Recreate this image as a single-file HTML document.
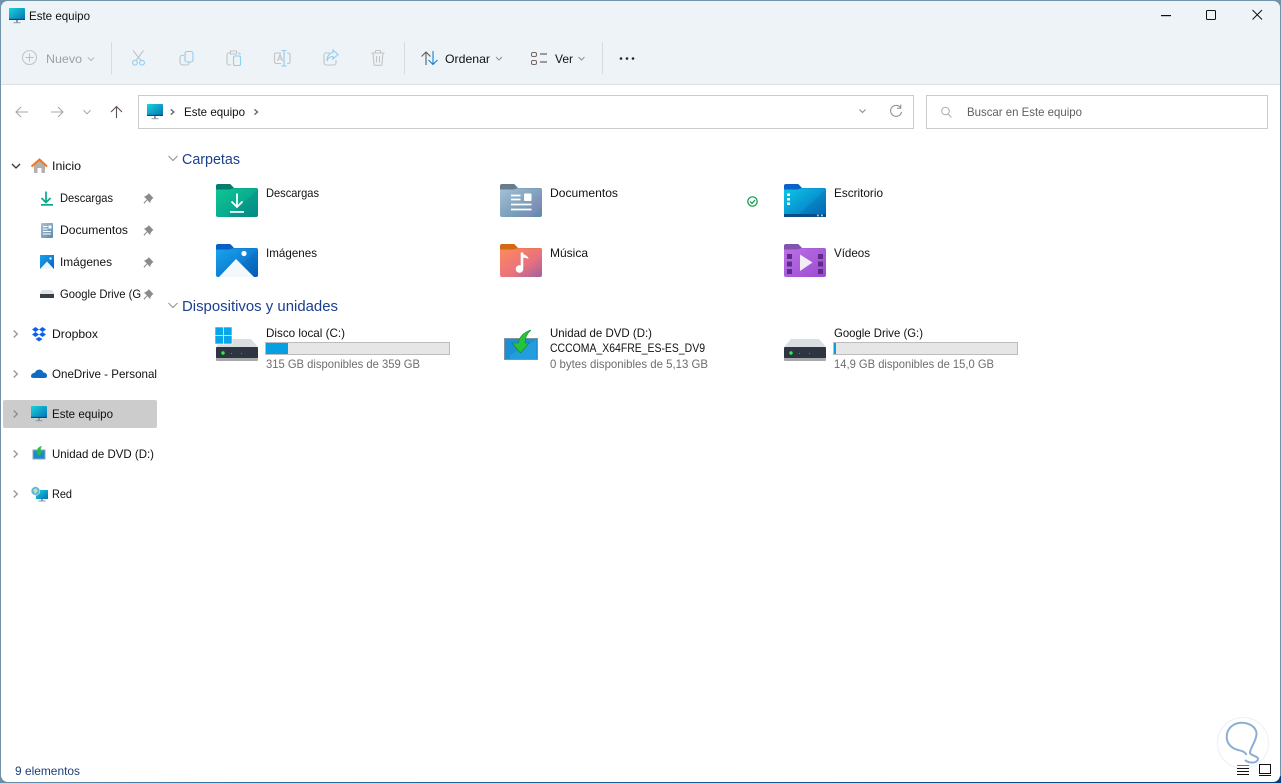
<!DOCTYPE html>
<html lang="es"><head><meta charset="utf-8"><title>Este equipo</title>
<style>
html,body{margin:0;padding:0;background:#fff;width:1281px;height:783px;overflow:hidden}
svg{display:block}
text{font-family:"Liberation Sans",sans-serif;font-size:12px;fill:#111;white-space:pre}
.g{fill:#6d6d6d}
.h{font-size:14.5px;fill:#1b3f8f}
.b{fill:none;stroke:#8fcdf3;stroke-width:1.1}
.y{fill:none;stroke:#c4c4c4;stroke-width:1.1}
</style></head><body>
<svg width="1281" height="783" viewBox="0 0 1281 783" xmlns="http://www.w3.org/2000/svg">
<defs>
<linearGradient id="mon" x1="0" y1="0" x2="1" y2="1"><stop offset="0" stop-color="#19d3d8"/><stop offset="1" stop-color="#0570b8"/></linearGradient>
<linearGradient id="gDl" x1="0" y1="0" x2="1" y2="1"><stop offset="0" stop-color="#0ec792"/><stop offset="1" stop-color="#04948e"/></linearGradient>
<linearGradient id="gDoc" x1="0" y1="0" x2="1" y2="1"><stop offset="0" stop-color="#a4c0d6"/><stop offset="1" stop-color="#5f87a8"/></linearGradient>
<linearGradient id="gDsk" x1="0" y1="0" x2="1" y2="1"><stop offset="0" stop-color="#0cc9e4"/><stop offset="1" stop-color="#0567c2"/></linearGradient>
<linearGradient id="gImg" x1="0" y1="0" x2="1" y2="1"><stop offset="0" stop-color="#1aa5ea"/><stop offset="1" stop-color="#0660c4"/></linearGradient>
<linearGradient id="gMus" x1="0" y1="0" x2="1" y2="1"><stop offset="0" stop-color="#fd8b5c"/><stop offset=".6" stop-color="#e8717e"/><stop offset="1" stop-color="#a2609f"/></linearGradient>
<linearGradient id="gVid" x1="0" y1="0" x2="1" y2="1"><stop offset="0" stop-color="#bc6fe6"/><stop offset="1" stop-color="#9a4ccf"/></linearGradient>
<linearGradient id="bot" x1="0" y1="0" x2="1" y2="0"><stop offset="0" stop-color="#6e8fa5"/><stop offset=".2" stop-color="#2f6a9c"/><stop offset="1" stop-color="#0b3a80"/></linearGradient>
<symbol id="monitor" viewBox="0 0 16 16" overflow="visible">
<rect x="0" y="0" width="16" height="12" rx=".8" fill="url(#mon)"/><rect x="0" y="10.800" width="16" height="1.200" fill="#0a4e78"/>
<rect x="7" y="12" width="2" height="2.400" fill="#8a9aa5"/><rect x="4.500" y="14.200" width="7" height="1" fill="#8a9aa5"/>
</symbol>
<symbol id="drive" viewBox="0 0 42 22" overflow="visible">
<path d="M7 0H35L42 8V20a2 2 0 0 1-2 2H2a2 2 0 0 1-2-2V8Z" fill="#d9dfe1"/>
<path d="M1 8H41a1 1 0 0 1 1 1V19H0V9a1 1 0 0 1 1-1Z" fill="#2f3540"/>
<rect x="0" y="19" width="42" height="3" rx="1" fill="#a6a8aa"/>
<circle cx="7" cy="14" r="1.700" fill="#2bf04a"/><rect x="15" y="14" width="1" height="1" fill="#8b7b45"/><rect x="25" y="14" width="1" height="1" fill="#8b7b45"/>
</symbol>
<path id="pin" d="M5 0 10 5 8.800 5.600 6.800 8.600 6.600 10 3.900 7.100 .8 10.600 0 9.800 3.300 6.400.4 3.600 1.800 3.300 4.600 1.200Z" fill="#8b8b8b"/>
<path id="chev" d="M-3.500-1.800 0 1.800 3.500-1.800" fill="none" stroke-width="1"/>
<path id="chevs" d="M-3-1.500 0 1.500 3-1.500" fill="none" stroke-width="1"/>
<path id="chevr" d="M-1.800-3.500 1.800 0-1.800 3.500" fill="none" stroke-width="1.400"/>
<path id="chevb" d="M-1.500-2.600 1.500 0-1.500 2.600" fill="none" stroke-width="1.400"/>
<path id="shade" d="M42 5V31a2 2 0 0 1-2 2H12Z" fill="#00304a" opacity=".1"/>
</defs>

<!-- frame -->
<rect width="1281" height="783" fill="#7193a8"/>
<rect x="0" y="776" width="1281" height="7" fill="url(#bot)"/>
<rect x="1" y="1" width="1279" height="781" rx="7" fill="#fff"/>
<path d="M1 84V8a7 7 0 0 1 7-7H1273a7 7 0 0 1 7 7V84Z" fill="#edf3f7"/>
<rect x="1" y="84" width="1279" height="1" fill="#dde1e4"/>

<!-- title bar -->
<use href="#monitor" x="9" y="8" width="16" height="16"/>
<text x="29" y="20" textLength="61" lengthAdjust="spacingAndGlyphs">Este equipo</text>
<rect x="1161" y="15" width="10" height="1.200" fill="#111"/>
<rect x="1206.500" y="10.500" width="9" height="9" rx="1" fill="none" stroke="#111"/>
<path d="M1252.500 10 1262 19.500M1262 10 1252.500 19.500" stroke="#111" fill="none"/>

<!-- toolbar -->
<circle cx="29.500" cy="57.500" r="7" fill="none" stroke="#c6c6c6" stroke-width="1.100"/>
<path d="M29.500 53.500V61.500M25.500 57.500H33.500" stroke="#8fcdf3"/>
<text x="46" y="63" style="fill:#a0a0a0" textLength="36" lengthAdjust="spacingAndGlyphs">Nuevo</text>
<use href="#chevs" x="91" y="59" stroke="#b5b5b5"/>
<rect x="111" y="42" width="1" height="32" fill="#d8dcdf"/>
<!-- scissors -->
<path class="y" d="M133 50.500 141 60.500M143.500 50.500 136 60.500"/>
<circle class="b" cx="135" cy="62.700" r="2.400"/><circle class="b" cx="142" cy="62.700" r="2.400"/>
<!-- copy -->
<rect class="b" x="185" y="51.500" width="8" height="10.500" rx="2"/>
<path class="y" d="M184 55.500H182a2 2 0 0 0-2 2V62a3 3 0 0 0 3 3H187a2 2 0 0 0 2-2V62.500"/>
<!-- paste -->
<path class="y" d="M230 53H229a2 2 0 0 0-2 2V63a2 2 0 0 0 2 2H231M238 53H239a2 2 0 0 1 1 1V55M230.500 51H236.500V54H230.500Z"/>
<rect class="b" x="233.500" y="56" width="7" height="9.500" rx="1.500"/>
<!-- rename -->
<path class="y" d="M281 53H276a1.500 1.500 0 0 0-1.500 1.500V62a1.500 1.500 0 0 0 1.500 1.500H281M287 53H288.500a1.500 1.500 0 0 1 1.500 1.500V62a1.500 1.500 0 0 1-1.500 1.500H287"/>
<path class="b" d="M281.500 50.500H286.500M284 50.500V66M281.500 66H286.500"/>
<path class="y" d="M277.500 61 280 54.500 282.500 61M278.500 59H281.500"/>
<!-- share -->
<path class="y" d="M330 53H326a2 2 0 0 0-2 2V63a2 2 0 0 0 2 2H334a2 2 0 0 0 2-2V60"/>
<path class="b" d="M333 50 338 54.500 333 59V56.500C330 56.500 328 58 327 61 327 56 329.500 53 333 52.500Z"/>
<!-- trash -->
<path class="y" d="M371.500 53H384.500M375 53 375.800 50.500H380.200L381 53M373 53 374 64.500a1 1 0 0 0 1 .8H381a1 1 0 0 0 1-.8L383 53M376.500 56V62.500M379.500 56V62.500"/>
<rect x="404" y="42" width="1" height="32" fill="#d8dcdf"/>
<!-- sort -->
<path d="M426 65V52M421.500 56.500 426 52 430.500 56.500" fill="none" stroke="#5d5d5d" stroke-width="1.100"/>
<path d="M433 51V64.500M428.500 60 433 64.500 437.500 60" fill="none" stroke="#0a84d8" stroke-width="1.100"/>
<text x="445" y="63" textLength="45" lengthAdjust="spacingAndGlyphs">Ordenar</text>
<use href="#chevs" x="499" y="58.500" stroke="#909090"/>
<!-- view -->
<rect x="531.500" y="52.500" width="5" height="4" rx="1.500" fill="none" stroke="#7a6565"/>
<rect x="531.500" y="60.500" width="5" height="4" rx="1.500" fill="none" stroke="#7a6565"/>
<path d="M540 54H547M540 62H547" stroke="#444"/>
<text x="555" y="63" textLength="18" lengthAdjust="spacingAndGlyphs">Ver</text>
<use href="#chevs" x="581.500" y="58.500" stroke="#909090"/>
<rect x="602" y="42" width="1" height="32" fill="#d8dcdf"/>
<circle cx="621" cy="58.500" r="1.300" fill="#222"/><circle cx="627" cy="58.500" r="1.300" fill="#222"/><circle cx="633" cy="58.500" r="1.300" fill="#222"/>

<!-- nav -->
<path d="M28 112H16M21 107 16 112 21 117" fill="none" stroke="#a8a8a8" stroke-width="1.100"/>
<path d="M51 112H63M58 107 63 112 58 117" fill="none" stroke="#a8a8a8" stroke-width="1.100"/>
<use href="#chev" x="87" y="112" stroke="#a0a0a0"/>
<path d="M116.500 118V106.500M111 112 116.500 106.500 122 112" fill="none" stroke="#5f5252" stroke-width="1.100"/>
<rect x="138.500" y="95.500" width="775" height="33" fill="#fff" stroke="#cbcbcb"/>
<use href="#monitor" x="147" y="104" width="16" height="16"/>
<use href="#chevb" x="172.300" y="112" stroke="#666"/>
<text x="184" y="116" textLength="61" lengthAdjust="spacingAndGlyphs">Este equipo</text>
<use href="#chevb" x="256" y="112" stroke="#666"/>
<use href="#chevs" x="862.500" y="111" stroke="#888"/>
<path d="M900.500 107.500A5.500 5.500 0 1 0 901.500 112M900.800 104.500V108.200H897" fill="none" stroke="#8a8a8a"/>
<rect x="926.500" y="95.500" width="341" height="33" fill="#fff" stroke="#cbcbcb"/>
<circle cx="945.500" cy="111" r="3.800" fill="none" stroke="#aaa"/><path d="M948 114 951.500 117.500" stroke="#aaa"/>
<text x="967" y="116" style="fill:#5f5f5f" textLength="115" lengthAdjust="spacingAndGlyphs">Buscar en Este equipo</text>

<!-- sidebar -->
<rect x="3" y="400" width="154" height="28" rx="2" fill="#cccccc"/>
<path d="M12 164 16 168 20 164" fill="none" stroke="#333" stroke-width="1.300"/>
<path d="M34 164.500V173H37.500V168H41.500V173H45V164.500L39.500 160Z" fill="#b4b0ac"/>
<path d="M31.500 166.500 39.500 159.500 47 166.500" fill="none" stroke="#f2761c" stroke-width="2"/>
<text x="52" y="170" textLength="29" lengthAdjust="spacingAndGlyphs">Inicio</text>

<path d="M46 191.500V202M41.500 198 46 202.500 50.500 198" fill="none" stroke="#0aa88c" stroke-width="1.700"/><rect x="41" y="204" width="12" height="1.700" fill="#0aa88c"/>
<text x="60" y="202" textLength="53" lengthAdjust="spacingAndGlyphs">Descargas</text>
<use href="#pin" x="143.500" y="193"/>

<rect x="41" y="223" width="12" height="15" rx="1" fill="url(#gDoc)"/>
<path d="M43 226.500H47.500M43 229H47.500M43 231.500H51M43 234H51" stroke="#fff" stroke-width="1"/><rect x="48.500" y="225.500" width="3" height="3" fill="#fff"/>
<text x="60" y="234" textLength="68" lengthAdjust="spacingAndGlyphs">Documentos</text>
<use href="#pin" x="143.500" y="225"/>

<rect x="40" y="255" width="14" height="14" fill="url(#gImg)"/>
<path d="M40 269 47 261.500 54 269Z" fill="#eef6fb"/><rect x="49.500" y="257.500" width="2" height="2" fill="#fff"/>
<text x="60" y="266" textLength="52" lengthAdjust="spacingAndGlyphs">Imágenes</text>
<use href="#pin" x="143.500" y="257"/>

<path d="M42 290H52L54 293V298H40V293Z" fill="#dfe3e5"/><rect x="40" y="294" width="14" height="4" fill="#3a3f45"/>
<svg x="0" y="285" width="141" height="20"><text x="60" y="13" textLength="88" lengthAdjust="spacingAndGlyphs">Google Drive (G:)</text></svg>
<use href="#pin" x="143.500" y="289"/>

<use href="#chevr" x="15.500" y="334" stroke="#9a9a9a"/>
<path d="M35.500 327 39 329.500 35.500 332 32 329.500ZM42.500 327 46 329.500 42.500 332 39 329.500ZM35.500 332 39 334.500 35.500 337 32 334.500ZM42.500 332 46 334.500 42.500 337 39 334.500ZM39 337 42.500 339 39 341.500 35.500 339Z" fill="#0a61f0"/>
<text x="52" y="338" textLength="46" lengthAdjust="spacingAndGlyphs">Dropbox</text>

<use href="#chevr" x="15.500" y="374" stroke="#9a9a9a"/>
<path d="M31 376.500C31 373.500 33.500 373 35 372.500 36.500 368.800 42 368.500 43.500 372.500 46 372.500 47.500 374.500 47 376.500 46.500 378 45 378 44 378H34C32 378 31 377.500 31 376.500Z" fill="#0f6cc4"/>
<text x="52" y="378" textLength="105" lengthAdjust="spacingAndGlyphs">OneDrive - Personal</text>

<use href="#chevr" x="15.500" y="414" stroke="#8f8f8f"/>
<use href="#monitor" x="31" y="406" width="16" height="16"/>
<text x="52" y="418" textLength="61" lengthAdjust="spacingAndGlyphs">Este equipo</text>

<use href="#chevr" x="15.500" y="454" stroke="#9a9a9a"/>
<rect x="33" y="450" width="12" height="9" fill="#1a8ad0" stroke="#8fa5b4"/>
<path d="M42 446C38 447 37 449 37.500 451L35.500 451 39 456 43 451 40.500 451C40.500 449 41 447.500 42 446Z" fill="#21c035"/>
<text x="52" y="458" textLength="102" lengthAdjust="spacingAndGlyphs">Unidad de DVD (D:)</text>

<use href="#chevr" x="15.500" y="494" stroke="#9a9a9a"/>
<rect x="36" y="490" width="12" height="9" rx=".5" fill="url(#mon)"/><rect x="41" y="499" width="2" height="2" fill="#8a9aa5"/><rect x="38.500" y="500.500" width="7" height="1" fill="#8a9aa5"/>
<circle cx="35.500" cy="491" r="4.300" fill="#5fb0dc" stroke="#dceaf3" stroke-width=".6"/><path d="M33 490 36 488 38 491 35 494Z" fill="#bfe2a8"/>
<text x="52" y="498" textLength="20" lengthAdjust="spacingAndGlyphs">Red</text>

<!-- section headers -->
<path d="M168.500 156 173 160.500 177.500 156" fill="none" stroke="#8f8f8f"/>
<text x="182" y="164" class="h" textLength="58" lengthAdjust="spacingAndGlyphs">Carpetas</text>
<path d="M168.500 303 173 307.500 177.500 303" fill="none" stroke="#8f8f8f"/>
<text x="182" y="311" class="h" textLength="156" lengthAdjust="spacingAndGlyphs">Dispositivos y unidades</text>

<!-- Descargas -->
<g transform="translate(216,184)">
<path d="M2 0H13.500a2 2 0 0 1 1.500.7L18 4H40a2 2 0 0 1 2 2V12H0V2a2 2 0 0 1 2-2Z" fill="#067a6c"/>
<path d="M0 5.500H13C15 5.500 16 4.300 18 4.300H40a2 2 0 0 1 2 2V31a2 2 0 0 1-2 2H2a2 2 0 0 1-2-2Z" fill="url(#gDl)"/>
<use href="#shade"/>
<path d="M21 9.500V22.500M15.500 17.500 21 23 26.500 17.500" fill="none" stroke="#fff" stroke-width="1.800"/><rect x="14" y="27" width="14" height="1.800" fill="#fff"/>
</g>
<text x="266" y="197" textLength="53" lengthAdjust="spacingAndGlyphs">Descargas</text>
<!-- Documentos -->
<g transform="translate(500,184)">
<path d="M2 0H13.500a2 2 0 0 1 1.500.7L18 4H40a2 2 0 0 1 2 2V12H0V2a2 2 0 0 1 2-2Z" fill="#687c8c"/>
<path d="M0 5.500H13C15 5.500 16 4.300 18 4.300H40a2 2 0 0 1 2 2V31a2 2 0 0 1-2 2H2a2 2 0 0 1-2-2Z" fill="url(#gDoc)"/>
<path d="M42 8V22L30 33H20Z" fill="#9a86c4" opacity=".3"/>
<path d="M11 11.500H20.500M11 15.500H20.500M11 20.500H31.500M11 25.500H31.500" stroke="#fff" stroke-width="1.800"/><rect x="24" y="9.500" width="7.500" height="7.500" rx="1" fill="#fff"/>
</g>
<text x="550" y="197" textLength="68" lengthAdjust="spacingAndGlyphs">Documentos</text>
<circle cx="752.500" cy="201.500" r="4.700" fill="#fff" stroke="#0a9a4a" stroke-width="1.200"/><path d="M750 201.500 752 203.500 755 200" fill="none" stroke="#0a9a4a" stroke-width="1.200"/>
<!-- Escritorio -->
<g transform="translate(784,184)">
<path d="M2 0H13.500a2 2 0 0 1 1.500.7L18 4H40a2 2 0 0 1 2 2V12H0V2a2 2 0 0 1 2-2Z" fill="#0a62c8"/>
<path d="M0 5.500H13C15 5.500 16 4.300 18 4.300H40a2 2 0 0 1 2 2V31a2 2 0 0 1-2 2H2a2 2 0 0 1-2-2Z" fill="url(#gDsk)"/>
<use href="#shade"/>
<rect x="0" y="30" width="42" height="3" fill="#074f86"/>
<rect x="3" y="9.500" width="3" height="2.500" fill="#fff"/><rect x="3" y="14" width="3" height="2.500" fill="#fff"/><rect x="3" y="18.500" width="3" height="2.500" fill="#fff"/>
<rect x="33" y="30.500" width="1.800" height="1.800" fill="#bcd"/><rect x="37" y="30.500" width="1.800" height="1.800" fill="#bcd"/>
</g>
<text x="834" y="197" textLength="49" lengthAdjust="spacingAndGlyphs">Escritorio</text>
<!-- Imagenes -->
<g transform="translate(216,244)">
<path d="M2 0H13.500a2 2 0 0 1 1.500.7L18 4H40a2 2 0 0 1 2 2V12H0V2a2 2 0 0 1 2-2Z" fill="#0a5fc6"/>
<path d="M0 5.500H13C15 5.500 16 4.300 18 4.300H40a2 2 0 0 1 2 2V31a2 2 0 0 1-2 2H2a2 2 0 0 1-2-2Z" fill="url(#gImg)"/>
<use href="#shade"/>
<path d="M3 33 20 15 38 33Z" fill="#f2f8fc"/><circle cx="28" cy="9.500" r="2.600" fill="#fff"/>
</g>
<text x="266" y="257" textLength="51" lengthAdjust="spacingAndGlyphs">Imágenes</text>
<!-- Musica -->
<g transform="translate(500,244)">
<path d="M2 0H13.500a2 2 0 0 1 1.500.7L18 4H40a2 2 0 0 1 2 2V12H0V2a2 2 0 0 1 2-2Z" fill="#d46a10"/>
<path d="M0 5.500H13C15 5.500 16 4.300 18 4.300H40a2 2 0 0 1 2 2V31a2 2 0 0 1-2 2H2a2 2 0 0 1-2-2Z" fill="url(#gMus)"/>
<path d="M22 8.500V24" stroke="#fff" stroke-width="2.600" fill="none"/><circle cx="19.500" cy="25" r="3.800" fill="#fff"/><path d="M22 8.500C23 11 28 11 28.500 15 26 13.500 24 14 22 13.500Z" fill="#fff"/>
</g>
<text x="550" y="257" textLength="38" lengthAdjust="spacingAndGlyphs">Música</text>
<!-- Videos -->
<g transform="translate(784,244)">
<path d="M2 0H13.500a2 2 0 0 1 1.500.7L18 4H40a2 2 0 0 1 2 2V12H0V2a2 2 0 0 1 2-2Z" fill="#8055ab"/>
<path d="M0 5.500H13C15 5.500 16 4.300 18 4.300H40a2 2 0 0 1 2 2V31a2 2 0 0 1-2 2H2a2 2 0 0 1-2-2Z" fill="url(#gVid)"/>
<rect x="3" y="10" width="5" height="5" fill="#5c2d86"/><rect x="3" y="17.500" width="5" height="5" fill="#5c2d86"/><rect x="3" y="25" width="5" height="5" fill="#5c2d86"/>
<rect x="34" y="10" width="5" height="5" fill="#5c2d86"/><rect x="34" y="17.500" width="5" height="5" fill="#5c2d86"/><rect x="34" y="25" width="5" height="5" fill="#5c2d86"/>
<path d="M16 10.500 28.500 18.500 16 27Z" fill="#f2ecf7"/>
</g>
<text x="834" y="257" textLength="36" lengthAdjust="spacingAndGlyphs">Vídeos</text>

<!-- Disco C -->
<use href="#drive" x="216" y="339" width="42" height="22"/>
<g fill="#0aa4ea" stroke="#fff" stroke-width=".6"><rect x="215" y="327" width="8.500" height="8.500"/><rect x="223.500" y="327" width="8.500" height="8.500"/><rect x="215" y="335.500" width="8.500" height="8.500"/><rect x="223.500" y="335.500" width="8.500" height="8.500"/></g>
<text x="266" y="337" textLength="79" lengthAdjust="spacingAndGlyphs">Disco local (C:)</text>
<rect x="265.500" y="342.500" width="184" height="12" fill="#e6e6e6" stroke="#bcbcbc"/>
<rect x="266" y="343" width="22" height="11" fill="#06a0e2"/>
<text x="266" y="368" class="g" textLength="154" lengthAdjust="spacingAndGlyphs">315 GB disponibles de 359 GB</text>

<!-- DVD -->
<rect x="504.500" y="338.500" width="33" height="21" fill="#1d8fd4" stroke="#7f93a1"/>
<path d="M510 355 536 340V359H510Z" fill="#2aa6e4" opacity=".6"/>
<path d="M531 330C524 332 519 337 518.500 343L512 343 520.500 353 529 343 525 343C525 338 527 333.500 531 330Z" fill="#25c43a" stroke="#118a2a" stroke-width=".6"/>
<text x="550" y="337" textLength="102" lengthAdjust="spacingAndGlyphs">Unidad de DVD (D:)</text>
<text x="550" y="352" textLength="155" lengthAdjust="spacingAndGlyphs">CCCOMA_X64FRE_ES-ES_DV9</text>
<text x="550" y="368" class="g" textLength="158" lengthAdjust="spacingAndGlyphs">0 bytes disponibles de 5,13 GB</text>

<!-- Google Drive -->
<use href="#drive" x="784" y="339" width="42" height="22"/>
<text x="834" y="337" textLength="89" lengthAdjust="spacingAndGlyphs">Google Drive (G:)</text>
<rect x="833.500" y="342.500" width="184" height="12" fill="#e6e6e6" stroke="#bcbcbc"/>
<rect x="834" y="343" width="2" height="11" fill="#06a0e2"/>
<text x="834" y="368" class="g" textLength="160" lengthAdjust="spacingAndGlyphs">14,9 GB disponibles de 15,0 GB</text>

<!-- watermark -->
<circle cx="1243" cy="743" r="25.500" fill="#fff" stroke="#e9f0f7"/>
<path d="M1245 760C1248 763 1256 764 1258 759.500 1259 756 1251 756 1250 753 1249.500 749 1256.500 741 1256.500 734 1256.500 727 1249 722.700 1241.700 722.700 1233 722.700 1226.700 729 1226.700 736.700 1226.700 743.500 1231.500 748.500 1238 750 1242 751 1245 751.500 1246.500 755" fill="none" stroke="#8aaed4" stroke-width="2"/>

<!-- status bar -->
<text x="15" y="775" style="fill:#1c3f78" textLength="65" lengthAdjust="spacingAndGlyphs">9 elementos</text>
<path d="M1237 765.500H1249" stroke="#8a6a6a"/><path d="M1237 768.500H1249M1237 771.500H1249M1237 774.500H1249" stroke="#111"/>
<rect x="1259.500" y="764.500" width="11" height="9" fill="none" stroke="#111"/><path d="M1259 775.500H1271" stroke="#111"/>
</svg>
</body></html>
